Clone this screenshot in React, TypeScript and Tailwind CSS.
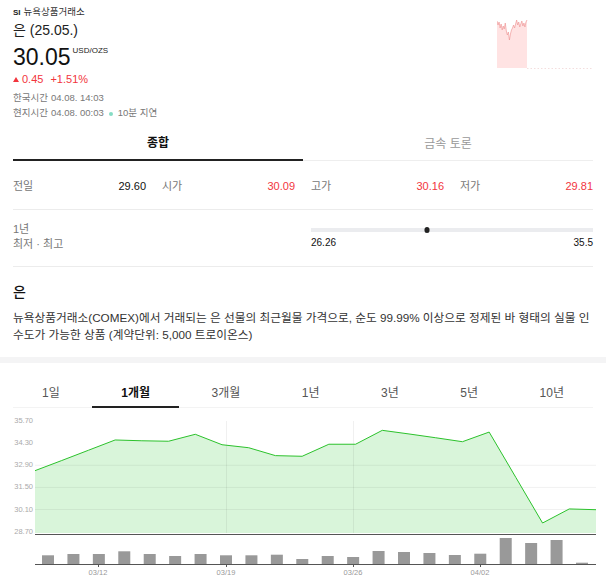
import React from "react";

const closes = [
  32.56, 33.2, 33.85, 34.5, 34.45, 34.42, 34.86, 34.2, 34.01, 33.51, 33.47,
  34.23, 34.23, 35.11, 34.88, 34.64, 34.39, 35.0, 32.13, 29.25, 30.14, 30.09,
];
const volumes = [
  8.7, 10, 10, 12.7, 10, 8, 10, 8.7, 8.7, 9.3, 5, 8, 7, 13, 12, 11, 9, 10.3, 26,
  21, 24, 1.3,
];
const yTicks = ["35.70", "34.30", "32.90", "31.50", "30.10", "28.70"];
const dates = [
  { x: 98, label: "03/12" },
  { x: 226, label: "03/19" },
  { x: 353, label: "03/26" },
  { x: 480, label: "04/02" },
];
const miniLine = [
  21, 25, 22, 28, 24, 30, 26, 29, 23, 31, 35, 32, 40, 34, 30, 28, 25, 28, 24,
  20, 25, 22, 27, 24, 21, 26, 23, 27, 22, 20,
];
const periods = ["1일", "1개월", "3개월", "1년", "3년", "5년", "10년"];

function MiniChart() {
  // spark chart, 500..596 x 19..69
  const pts = miniLine.map((y, i) => `${(i * 30) / (miniLine.length - 1)},${y - 19}`);
  return (
    <svg width="96" height="51" className="mt-[19px] shrink-0">
      <polygon points={`0,49 ${pts.join(" ")} 30,49`} fill="#ffe3e3" />
      <polyline points={pts.join(" ")} fill="none" stroke="#ef9a9a" strokeWidth="0.7" />
      <line x1="30" y1="49.5" x2="96" y2="49.5" stroke="#f3dede" strokeDasharray="1.5 2" />
    </svg>
  );
}

function PriceChart() {
  const top = 409;
  const x = (i: number) => 35 + (i * 561) / (closes.length - 1);
  const y = (v: number) => 422 + ((35.7 - v) / 1.4) * 22.14 - top;
  const line = closes.map((v, i) => `${x(i)},${y(v)}`).join(" ");
  const base = 534 - top;
  const volBase = 565 - top;
  return (
    <svg width="606" height="177" className="block">
      {yTicks.map((t, i) => (
        <text
          key={t}
          x="33"
          y={422 + i * 22.14 - top}
          textAnchor="end"
          dominantBaseline="middle"
          fontSize="7.5"
          fill="#aaa"
          fontFamily="'Liberation Sans', sans-serif"
        >
          {t}
        </text>
      ))}
      <polygon points={`35,${base} ${line} 596,${base}`} fill="#d9f5da" />
      {[2, 3, 4].map((i) => (
        <line key={i} x1="35" x2="596" y1={422 + i * 22.14 - top} y2={422 + i * 22.14 - top} stroke="#000" strokeOpacity="0.06" />
      ))}
      {[226, 353].map((gx) => (
        <line key={gx} x1={gx + 0.5} x2={gx + 0.5} y1={422 - top} y2={base} stroke="#000" strokeOpacity="0.06" />
      ))}
      <polyline points={line} fill="none" stroke="#2cc22c" strokeWidth="1" />
      <line x1="35" x2="596" y1={base + 1.5} y2={base + 1.5} stroke="#555" strokeWidth="1" />
      {volumes.map((h, i) => {
        const cx = 48 + (i * 534) / (volumes.length - 1);
        return <rect key={i} x={cx - 6} y={volBase - h} width="12" height={h} fill="#999" />;
      })}
      <line x1="35" x2="596" y1={volBase + 0.5} y2={volBase + 0.5} stroke="#555" strokeWidth="1" />
      {dates.map((d) => (
        <g key={d.label}>
          <line x1={d.x + 0.5} x2={d.x + 0.5} y1={volBase} y2={volBase + 3} stroke="#555" />
          <text
            x={d.x}
            y={574 - top}
            textAnchor="middle"
            dominantBaseline="middle"
            fontSize="7.5"
            fill="#999"
            fontFamily="'Liberation Sans', sans-serif"
          >
            {d.label}
          </text>
        </g>
      ))}
    </svg>
  );
}

function StatCell({ label, value, red }: { label: string; value: string; red?: boolean }) {
  return (
    <div className="flex items-center justify-between">
      <span className="text-[#777]">{label}</span>
      <span className={red ? "text-[#f2353d]" : "text-[#111]"}>{value}</span>
    </div>
  );
}

export default function App() {
  const low = 26.26;
  const high = 35.5;
  const pos = ((30.05 - low) / (high - low)) * 100;

  return (
    <div className="w-[606px] h-[586px] overflow-hidden bg-white text-[#222] font-['Liberation_Sans','Noto_Sans_CJK_KR',sans-serif]">
      <div className="px-[13px]">
        {/* header */}
        <div className="flex justify-between">
          <div className="pt-[5px]">
            <div className="flex h-[15px] items-center gap-[3px]">
              <span className="text-[8px] font-bold">SI</span>
              <span className="text-[9.5px] text-[#333]">뉴욕상품거래소</span>
            </div>
            <div className="h-[20px] text-[14px] leading-[20px]">은 (25.05.)</div>
            <div className="mt-[3px] flex h-[28px] items-start">
              <span className="text-[23px] leading-[28px] text-[#111]">30.05</span>
              <span className="ml-[2px] mt-[4px] text-[8px] leading-[8px]">USD/OZS</span>
            </div>
            <div className="mt-[1px] flex h-[14px] items-center text-[11px] text-[#f2353d]">
              <svg width="6" height="5" className="mr-[3px]">
                <polygon points="3,0 6,5 0,5" fill="#f2353d" />
              </svg>
              <span>0.45</span>
              <span className="ml-[7px]">+1.51%</span>
            </div>
            <div className="mt-[5px] flex h-[15px] items-center gap-[3px] text-[9.5px] text-[#777]">
              <span>한국시간</span>
              <span>04.08. 14:03</span>
            </div>
            <div className="flex h-[15px] items-center gap-[3px] text-[9.5px] text-[#777]">
              <span>현지시간</span>
              <span>04.08. 00:03</span>
              <span className="mx-[2px] h-[4px] w-[4px] rounded-full bg-[#86dcc4]" />
              <span>10분 지연</span>
            </div>
          </div>
          <MiniChart />
        </div>

        {/* tabs */}
        <div className="mt-[6px] grid grid-cols-2 text-[12px]">
          <div className="flex h-[34px] items-center justify-center border-b-2 border-[#222] font-bold text-[#111]">
            종합
          </div>
          <div className="flex h-[34px] items-center justify-center border-b border-[#eeeeee] text-[#999]">
            금속 토론
          </div>
        </div>

        {/* stats */}
        <div className="grid h-[49px] grid-cols-4 items-center gap-x-[16px] border-b border-[#ececec] pt-[2px] text-[11px]">
          <StatCell label="전일" value="29.60" />
          <StatCell label="시가" value="30.09" red />
          <StatCell label="고가" value="30.16" red />
          <StatCell label="저가" value="29.81" red />
        </div>

        {/* 52w range */}
        <div className="grid h-[57px] grid-cols-2 gap-x-[16px] border-b border-[#ececec] pt-[12px]">
          <div className="text-[11px] leading-[15px] text-[#777]">
            <div>1년</div>
            <div>최저 · 최고</div>
          </div>
          <div>
            <div className="relative mt-[6px] h-[4px] bg-[#ebecef]">
              <div
                className="absolute top-[-1px] h-[6px] w-[5px] -translate-x-1/2 rounded-full bg-[#222]"
                style={{ left: `${pos}%` }}
              />
            </div>
            <div className="mt-[4px] flex justify-between text-[10px] leading-[14px] text-[#111]">
              <span>26.26</span>
              <span>35.5</span>
            </div>
          </div>
        </div>

        {/* description */}
        <div className="pt-[15px] pb-[14px]">
          <h2 className="h-[20px] text-[14px] font-medium leading-[20px] text-[#111]">은</h2>
          <p className="mt-[7px] text-[11.7px] leading-[17px] text-[#333]">
            뉴욕상품거래소(COMEX)에서 거래되는 은 선물의 최근월물 가격으로, 순도 99.99% 이상으로 정제된 바 형태의 실물 인수도가 가능한 상품 (계약단위: 5,000 트로이온스)
          </p>
        </div>
      </div>

      <div className="h-[6px] bg-[#f4f4f5]" />

      {/* period tabs */}
      <div className="px-[13px] pt-[16px]">
        <div className="flex justify-between border-b border-[#f3f3f3] text-[12px]">
          {periods.map((p) => (
            <div
              key={p}
              className={
                p === "1개월"
                  ? "-mb-px flex h-[29px] items-center border-b-2 border-[#222] px-[29px] font-bold text-[#111]"
                  : "flex h-[28px] items-center px-[29px] text-[#555]"
              }
            >
              {p}
            </div>
          ))}
        </div>
      </div>

      <PriceChart />
    </div>
  );
}
